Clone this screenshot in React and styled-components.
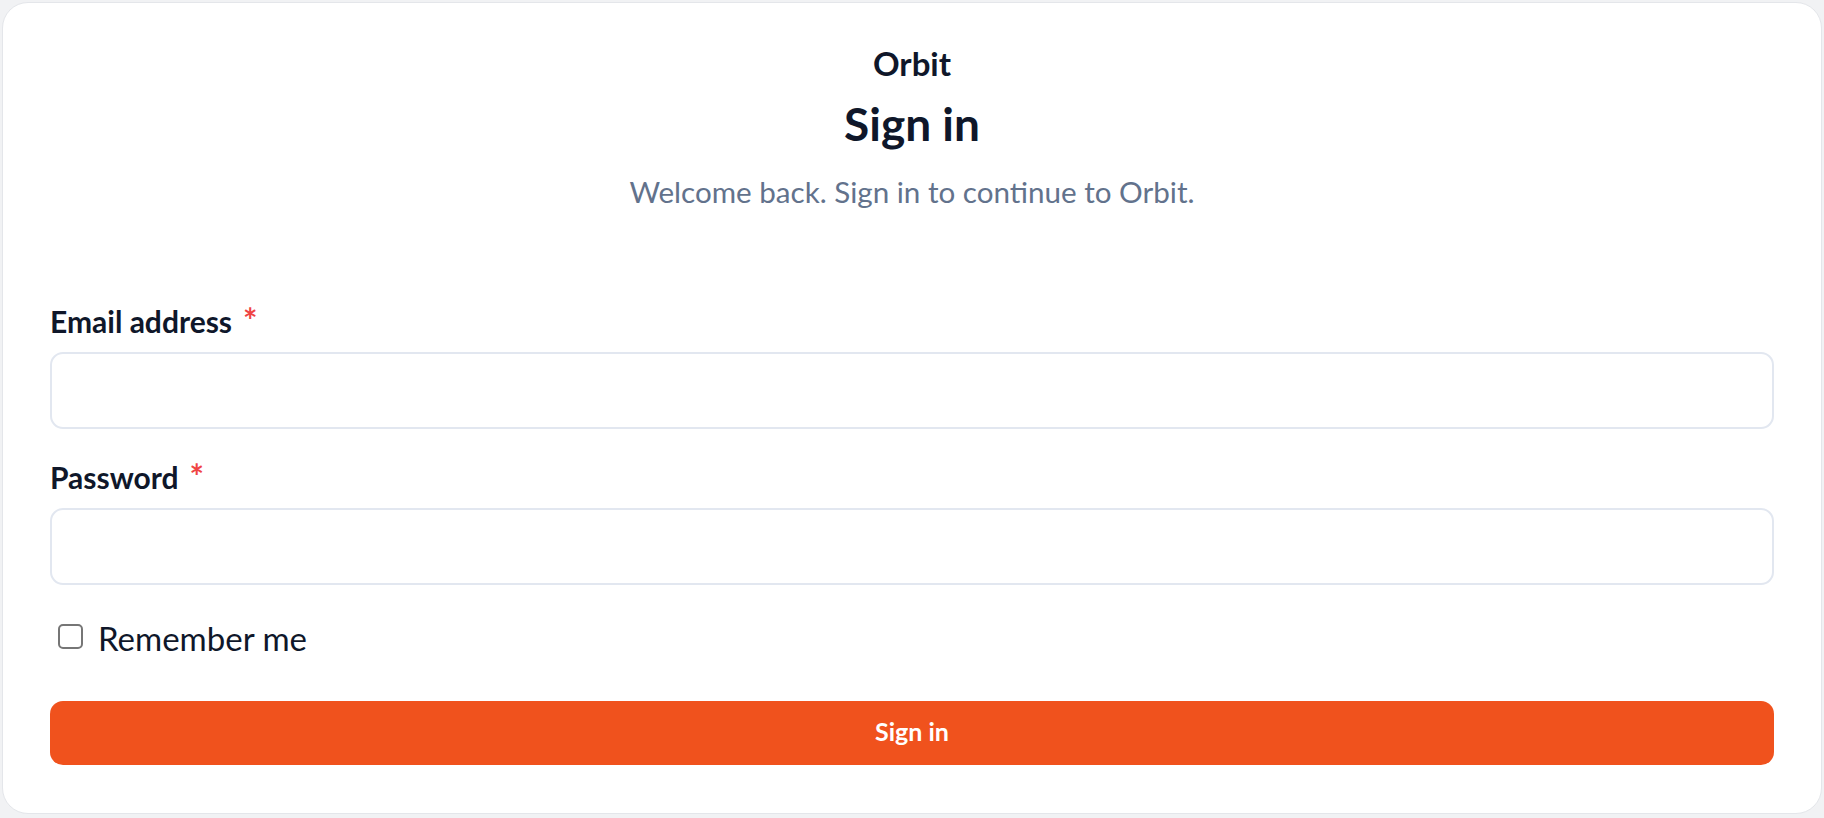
import React, { useState } from 'react';
import styled, { createGlobalStyle } from 'styled-components';

const GlobalStyle = createGlobalStyle`
  * {
    box-sizing: border-box;
  }

  body {
    margin: 0;
    background: #f1f2f4;
    font-family: Lato, "Open Sans", sans-serif;
    color: #0f172a;
  }
`;

const Card = styled.div`
  margin: 2px;
  background: #fff;
  border: 1px solid #e4e6ea;
  border-radius: 26px;
  padding: 41px 47px 48px;
`;

const Header = styled.header`
  text-align: center;
  margin-bottom: 95px;
`;

const Brand = styled.div`
  font-size: 33px;
  line-height: 38px;
  font-weight: 700;
  color: #0f172a;
`;

const Title = styled.h1`
  margin: 16px 0 0;
  font-size: 46px;
  line-height: 52px;
  font-weight: 700;
  color: #0f172a;
`;

const Subtitle = styled.p`
  margin: 25px 0 0;
  font-size: 29.6px;
  line-height: 34px;
  color: #62728c;
`;

const Form = styled.form`
  display: flex;
  flex-direction: column;
`;

const Field = styled.div`
  display: flex;
  flex-direction: column;
  gap: 14px;
  margin-bottom: ${props => props.last ? '34px' : '31px'};
`;

const Label = styled.label`
  font-size: 30px;
  line-height: 34px;
  font-weight: 700;
  color: #0f172a;
`;

const Required = styled.span`
  color: #ef4444;
  margin-left: 11px;
  font-size: 34px;
  line-height: 0;
`;

const Input = styled.input`
  height: 77px;
  width: 100%;
  border: 2px solid #e2e7f0;
  border-radius: 13px;
  padding: 0 18px;
  font-family: inherit;
  font-size: 26px;
  color: #0f172a;
  background: #fff;

  &:focus {
    outline: none;
    border-color: #f0521d;
  }
`;

const CheckRow = styled.label`
  display: flex;
  align-items: flex-start;
  gap: 15px;
  padding-left: 8px;
  margin-bottom: 44px;
  cursor: pointer;
`;

const Checkbox = styled.input`
  appearance: none;
  flex-shrink: 0;
  margin: 5px 0 0;
  width: 25px;
  height: 25px;
  border: 2px solid #767676;
  border-radius: 5px;
  background: #fff;
  cursor: pointer;

  &:checked {
    background: #f0521d;
    border-color: #f0521d;
  }
`;

const CheckText = styled.span`
  font-size: 33px;
  line-height: 38px;
  color: #0f172a;
`;

const SubmitButton = styled.button`
  height: 64px;
  width: 100%;
  border: none;
  border-radius: 13px;
  background: #f0521d;
  color: #fff;
  font-family: inherit;
  font-size: 25px;
  line-height: 1;
  font-weight: 700;
  padding: 0 0 3px;
  cursor: pointer;

  &:hover {
    background: #e0481a;
  }
`;

const App = () => {
  const [email, setEmail] = useState('');
  const [password, setPassword] = useState('');
  const [remember, setRemember] = useState(false);

  return (
    <>
      <GlobalStyle />
      <Card>
        <Header>
          <Brand>Orbit</Brand>
          <Title>Sign in</Title>
          <Subtitle>Welcome back. Sign in to continue to Orbit.</Subtitle>
        </Header>

        <Form onSubmit={e => e.preventDefault()}>
          <Field>
            <Label htmlFor="email">
              Email address<Required>*</Required>
            </Label>
            <Input
              id="email"
              type="email"
              value={email}
              onChange={e => setEmail(e.target.value)}
            />
          </Field>

          <Field last>
            <Label htmlFor="password">
              Password<Required>*</Required>
            </Label>
            <Input
              id="password"
              type="password"
              value={password}
              onChange={e => setPassword(e.target.value)}
            />
          </Field>

          <CheckRow>
            <Checkbox
              type="checkbox"
              checked={remember}
              onChange={e => setRemember(e.target.checked)}
            />
            <CheckText>Remember me</CheckText>
          </CheckRow>

          <SubmitButton type="submit">Sign in</SubmitButton>
        </Form>
      </Card>
    </>
  );
};

export default App;
